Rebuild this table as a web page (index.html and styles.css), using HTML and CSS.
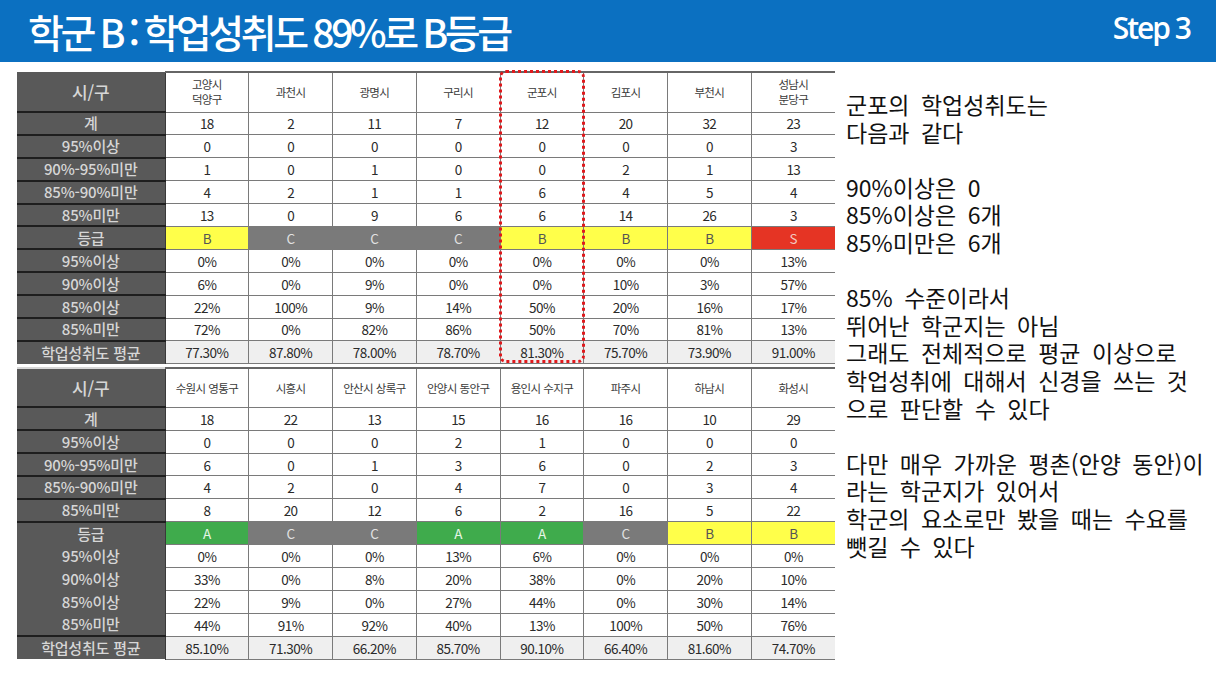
FILE: index.html
```html
<!DOCTYPE html>
<html lang="ko">
<head>
<meta charset="utf-8">
<title>학군 B</title>
<link rel="stylesheet" href="styles.css">
</head>
<body>
<header class="topbar">
  <h1 class="title">학군 B : 학업성취도 89%로 B등급</h1>
  <div class="step">Step 3</div>
</header>
<main class="content">
  <section class="tables">
    <div class="tbl-wrap">
      <table class="grid top">
        <colgroup><col class="c-label"><col><col><col><col><col><col><col><col></colgroup>
        <tr class="head"><th class="lbl big">시/구</th><td>고양시<br>덕양구</td><td>과천시</td><td>광명시</td><td>구리시</td><td>군포시</td><td>김포시</td><td>부천시</td><td>성남시<br>분당구</td></tr>
        <tr><th class="lbl">계</th><td>18</td><td>2</td><td>11</td><td>7</td><td>12</td><td>20</td><td>32</td><td>23</td></tr>
        <tr><th class="lbl">95%이상</th><td>0</td><td>0</td><td>0</td><td>0</td><td>0</td><td>0</td><td>0</td><td>3</td></tr>
        <tr><th class="lbl">90%-95%미만</th><td>1</td><td>0</td><td>1</td><td>0</td><td>0</td><td>2</td><td>1</td><td>13</td></tr>
        <tr><th class="lbl">85%-90%미만</th><td>4</td><td>2</td><td>1</td><td>1</td><td>6</td><td>4</td><td>5</td><td>4</td></tr>
        <tr><th class="lbl">85%미만</th><td>13</td><td>0</td><td>9</td><td>6</td><td>6</td><td>14</td><td>26</td><td>3</td></tr>
        <tr class="grade"><th class="lbl">등급</th><td class="g-b">B</td><td class="g-c">C</td><td class="g-c">C</td><td class="g-c">C</td><td class="g-b">B</td><td class="g-b">B</td><td class="g-b">B</td><td class="g-s">S</td></tr>
        <tr><th class="lbl">95%이상</th><td>0%</td><td>0%</td><td>0%</td><td>0%</td><td>0%</td><td>0%</td><td>0%</td><td>13%</td></tr>
        <tr><th class="lbl">90%이상</th><td>6%</td><td>0%</td><td>9%</td><td>0%</td><td>0%</td><td>10%</td><td>3%</td><td>57%</td></tr>
        <tr><th class="lbl">85%이상</th><td>22%</td><td>100%</td><td>9%</td><td>14%</td><td>50%</td><td>20%</td><td>16%</td><td>17%</td></tr>
        <tr><th class="lbl">85%미만</th><td>72%</td><td>0%</td><td>82%</td><td>86%</td><td>50%</td><td>70%</td><td>81%</td><td>13%</td></tr>
        <tr class="avg"><th class="lbl">학업성취도 평균</th><td>77.30%</td><td>87.80%</td><td>78.00%</td><td>78.70%</td><td>81.30%</td><td>75.70%</td><td>73.90%</td><td>91.00%</td></tr>
      </table>
      <div class="highlight"></div>
    </div>
    <table class="grid bottom">
      <colgroup><col class="c-label"><col><col><col><col><col><col><col><col></colgroup>
      <tr class="head"><th class="lbl big">시/구</th><td>수원시 영통구</td><td>시흥시</td><td>안산시 상록구</td><td>안양시 동안구</td><td>용인시 수지구</td><td>파주시</td><td>하남시</td><td>화성시</td></tr>
      <tr><th class="lbl">계</th><td>18</td><td>22</td><td>13</td><td>15</td><td>16</td><td>16</td><td>10</td><td>29</td></tr>
      <tr><th class="lbl">95%이상</th><td>0</td><td>0</td><td>0</td><td>2</td><td>1</td><td>0</td><td>0</td><td>0</td></tr>
      <tr><th class="lbl">90%-95%미만</th><td>6</td><td>0</td><td>1</td><td>3</td><td>6</td><td>0</td><td>2</td><td>3</td></tr>
      <tr><th class="lbl">85%-90%미만</th><td>4</td><td>2</td><td>0</td><td>4</td><td>7</td><td>0</td><td>3</td><td>4</td></tr>
      <tr><th class="lbl">85%미만</th><td>8</td><td>20</td><td>12</td><td>6</td><td>2</td><td>16</td><td>5</td><td>22</td></tr>
      <tr class="grade"><th class="lbl">등급</th><td class="g-a">A</td><td class="g-c">C</td><td class="g-c">C</td><td class="g-a">A</td><td class="g-a">A</td><td class="g-c">C</td><td class="g-b">B</td><td class="g-b">B</td></tr>
      <tr class="nosep"><th class="lbl">95%이상</th><td>0%</td><td>0%</td><td>0%</td><td>13%</td><td>6%</td><td>0%</td><td>0%</td><td>0%</td></tr>
      <tr class="nosep"><th class="lbl">90%이상</th><td>33%</td><td>0%</td><td>8%</td><td>20%</td><td>38%</td><td>0%</td><td>20%</td><td>10%</td></tr>
      <tr class="nosep"><th class="lbl">85%이상</th><td>22%</td><td>9%</td><td>0%</td><td>27%</td><td>44%</td><td>0%</td><td>30%</td><td>14%</td></tr>
      <tr class="nosep"><th class="lbl">85%미만</th><td>44%</td><td>91%</td><td>92%</td><td>40%</td><td>13%</td><td>100%</td><td>50%</td><td>76%</td></tr>
      <tr class="avg"><th class="lbl">학업성취도 평균</th><td>85.10%</td><td>71.30%</td><td>66.20%</td><td>85.70%</td><td>90.10%</td><td>66.40%</td><td>81.60%</td><td>74.70%</td></tr>
    </table>
  </section>
  <section class="notes">
    <p>군포의 학업성취도는<br>다음과 같다</p>
    <p>90%이상은 0<br>85%이상은 6개<br>85%미만은 6개</p>
    <p>85% 수준이라서<br>뛰어난 학군지는 아님<br>그래도 전체적으로 평균 이상으로<br>학업성취에 대해서 신경을 쓰는 것<br>으로 판단할 수 있다</p>
    <p>다만 매우 가까운 평촌(안양 동안)이<br>라는 학군지가 있어서<br>학군의 요소로만 봤을 때는 수요를<br>뺏길 수 있다</p>
  </section>
</main>
</body>
</html>
```

FILE: styles.css
```css
* { box-sizing: border-box; }
html, body { margin: 0; padding: 0; background: #ffffff; }
body {
  width: 1216px;
  height: 684px;
  overflow: hidden;
  font-family: "Noto Sans CJK KR", "Noto Sans", sans-serif;
  color: #111;
}

.topbar {
  height: 62px;
  background: #0b70c1;
  display: flex;
  align-items: center;
  justify-content: space-between;
  padding: 0 26px 0 28px;
  color: #fff;
}
.title {
  margin: 0;
  font-size: 39px;
  font-weight: 500;
  letter-spacing: -3.4px;
  word-spacing: -1px;
  line-height: 1;
  padding-top: 0;
}
.step {
  font-family: "Open Sans", "Noto Sans", sans-serif;
  font-size: 30px;
  font-weight: 600;
  letter-spacing: -2px;
  line-height: 1;
  margin-bottom: 6px;
}

.content {
  display: flex;
  padding: 9px 0 0 17px;
}
.tables {
  width: 818px;
  flex: none;
  display: flex;
  flex-direction: column;
}
.tbl-wrap { position: relative; }

.grid {
  width: 818px;
  table-layout: fixed;
  border-collapse: collapse;
  font-size: 13.5px;
  letter-spacing: -0.5px;
}
.grid.bottom {
  margin-top: 3px;
  border-top: 2px solid #d8d8d8;
}
.c-label { width: 148px; }
.grid td, .grid th {
  padding: 0;
  height: 22.9px;
  text-align: center;
  vertical-align: middle;
  line-height: 16px;
}
.grid td {
  border: 1px solid #7a7a7a;
  border-top: 1.5px solid #555;
  color: #2a2a2a;
  background: #fff;
}
.grid tr:first-child td { border-top: 2px solid #666; }
.grid td:last-child { border-right: none; }
.grid .lbl {
  background: #595959;
  color: #d6d6d6;
  font-weight: 500;
  font-size: 15px;
  letter-spacing: -0.2px;
  border-top: 2px solid #1e1e1e;
  border-right: 1px solid #3a3a3a;
}
.grid tr:first-child .lbl { border-top: none; }
.grid tr.nosep .lbl { border-top: none; }
.grid .lbl.big { font-size: 17px; }
.grid tr.head td {
  height: 40px;
  font-size: 11.5px;
  line-height: 15px;
  color: #3a3a3a;
  letter-spacing: -0.6px;
}
.grid.bottom tr.head td { height: 39px; }
.grid tr.avg td { background: #efefef; }

.grid td.g-b { background: #ffff4a; color: #555; }
.grid td.g-c { background: #7a7a7a; color: #e2e2e2; }
.grid td.g-s { background: #e53424; color: #f4c8c0; }
.grid td.g-a { background: #3fab4c; color: #e6f6e6; }

.highlight {
  position: absolute;
  left: 482px;
  top: -1px;
  width: 86px;
  height: 293px;
  border: 3px dotted #e0191c;
  border-radius: 7px;
  pointer-events: none;
}

.notes {
  padding: 20px 0 0 11px;
  font-size: 23px;
  line-height: 27.6px;
  word-spacing: 5px;
  letter-spacing: 0px;
  color: #111;
  white-space: nowrap;
}
.notes p { margin: 0 0 27.6px 0; }
```
